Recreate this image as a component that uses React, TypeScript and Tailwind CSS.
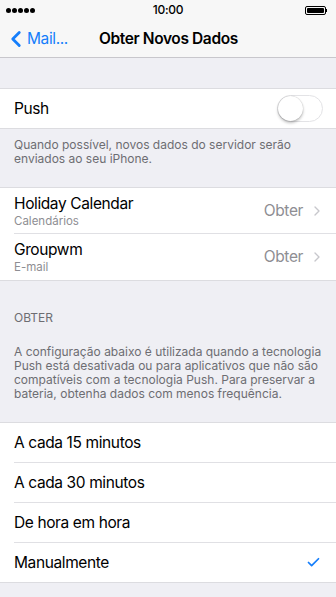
import { ChevronLeft, ChevronRight, Check } from "lucide-react";

const Row = ({ children, last }: { children: React.ReactNode; last?: boolean }) => (
  <div className="pl-[14px]">
    <div className={`flex items-center pr-[14px] ${last ? "" : "border-b border-[#e0e0e4]"}`}>{children}</div>
  </div>
);

const App = () => {
  const options = ["A cada 15 minutos", "A cada 30 minutos", "De hora em hora", "Manualmente"];
  return (
    <div className="w-[336px] h-[597px] overflow-hidden bg-[#efeff4] text-black" style={{ fontFamily: "Inter, 'Liberation Sans', sans-serif" }}>
      {/* status bar */}
      <div className="bg-[#f7f7f7] h-[20px] flex items-center justify-between px-[6px] relative">
        <div className="flex gap-[1px]">
          {[0, 1, 2, 3, 4].map((i) => (
            <span key={i} className="w-[5px] h-[5px] rounded-full bg-black" />
          ))}
        </div>
        <span className="absolute left-0 right-0 text-center text-[12px] font-medium tracking-tight">10:00</span>
        <div className="flex items-center mr-[3px]">
          <div className="w-[21px] h-[9px] rounded-[2px] border border-black p-[1px]">
            <div className="w-full h-full bg-black rounded-[1px]" />
          </div>
          <div className="w-[1.5px] h-[3px] bg-black" />
        </div>
      </div>
      {/* nav */}
      <div className="bg-[#f7f7f7] h-[38px] border-b border-[#c8c7cc] flex items-center relative">
        <div className="flex items-center text-[#157efb] pl-[3px]">
          <ChevronLeft size={26} strokeWidth={2.6} className="-mr-[2px]" />
          <span className="text-[15.5px] tracking-tight">Mail...</span>
        </div>
        <span className="absolute left-[99px] text-[15.5px] font-semibold tracking-tight">Obter Novos Dados</span>
      </div>

      <div className="h-[30px]" />
      <div className="bg-white border-y border-[#dcdce0] h-[41px] flex items-center justify-between px-[14px]">
        <span className="text-[15.5px] tracking-tight">Push</span>
        <div className="w-[46px] h-[27px] rounded-full border border-[#e3e3e6] bg-white relative -mr-[1px]">
          <div className="absolute left-0 top-0 w-[25px] h-[25px] rounded-full bg-white shadow-[0_2px_3px_rgba(0,0,0,0.25),0_0_1px_rgba(0,0,0,0.3)]" />
        </div>
      </div>
      <p className="px-[14px] pt-[9px] pb-[21px] text-[12px] leading-[14px] text-[#6d6d72]">
        Quando possível, novos dados do servidor serão enviados ao seu iPhone.
      </p>

      <div className="bg-white border-y border-[#dcdce0]">
        {[
          ["Holiday Calendar", "Calendários"],
          ["Groupwm", "E-mail"],
        ].map(([t, s], i) => (
          <Row key={t} last={i === 1}>
            <div className={`flex-1 flex flex-col justify-center ${i === 1 ? "h-[46px]" : "h-[45px]"}`}>
              <span className="text-[15.5px] leading-[20px] tracking-tight">{t}</span>
              <span className="text-[11.5px] leading-[14px] text-[#8e8e93]">{s}</span>
            </div>
            <span className="text-[15.5px] text-[#8e8e93] tracking-tight mr-[6px]">Obter</span>
            <ChevronRight size={16} strokeWidth={2} className="text-[#c7c7cc] -mr-[3px]" />
          </Row>
        ))}
      </div>

      <p className="px-[14px] pt-[30px] text-[12px] leading-[14px] text-[#6d6d72]">OBTER</p>
      <p className="px-[14px] pt-[20px] pb-[21px] text-[12px] leading-[14px] text-[#6d6d72]">
        A configuração abaixo é utilizada quando a tecnologia Push está desativada ou para aplicativos que não são compatíveis com a tecnologia Push. Para preservar a bateria, obtenha dados com menos frequência.
      </p>

      <div className="bg-white border-y border-[#dcdce0]">
        {options.map((o, i) => (
          <Row key={o} last={i === options.length - 1}>
            <span className="flex-1 h-[39px] flex items-center text-[15.5px] tracking-tight">{o}</span>
            {i === 3 && <Check size={15} strokeWidth={2.8} className="text-[#157efb] mr-[1px]" />}
          </Row>
        ))}
      </div>
    </div>
  );
};

export default App;
